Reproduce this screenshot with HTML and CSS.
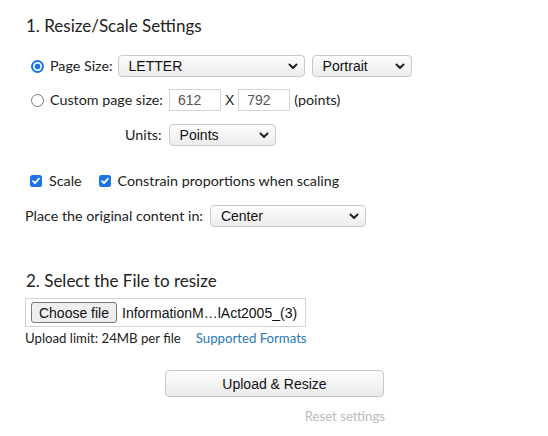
FILE: index.html
```html
<!DOCTYPE html>
<html>
<head>
<meta charset="utf-8">
<link rel="stylesheet" href="styles.css">
</head>
<body>
<div class="page">
  <h2 class="heading h1">1. Resize/Scale Settings</h2>

  <div class="row row-size">
    <input type="radio" name="mode" class="radio" checked>
    <span class="label">Page Size:</span>
    <span class="sel sel-size"><select><option>LETTER</option></select><svg class="chev" width="10" height="7" viewBox="0 0 10 7"><path d="M1.5 1.5 L5 5 L8.5 1.5" fill="none" stroke="#222" stroke-width="2" stroke-linecap="round" stroke-linejoin="round"/></svg></span>
    <span class="sel sel-orient"><select><option>Portrait</option></select><svg class="chev" width="10" height="7" viewBox="0 0 10 7"><path d="M1.5 1.5 L5 5 L8.5 1.5" fill="none" stroke="#222" stroke-width="2" stroke-linecap="round" stroke-linejoin="round"/></svg></span>
  </div>

  <div class="row row-custom">
    <input type="radio" name="mode" class="radio">
    <span class="label lbl-custom">Custom page size:</span>
    <input type="text" class="num" value="612">
    <span class="label x">X</span>
    <input type="text" class="num" value="792">
    <span class="label pts">(points)</span>
  </div>

  <div class="row row-units">
    <span class="label">Units:</span>
    <span class="sel sel-units"><select><option>Points</option></select><svg class="chev" width="10" height="7" viewBox="0 0 10 7"><path d="M1.5 1.5 L5 5 L8.5 1.5" fill="none" stroke="#222" stroke-width="2" stroke-linecap="round" stroke-linejoin="round"/></svg></span>
  </div>

  <div class="row row-check">
    <span class="check"><svg width="12" height="12" viewBox="0 0 12 12"><path d="M3 6.2 L5 8.2 L9 3.6" fill="none" stroke="#fff" stroke-width="1.8" stroke-linecap="round" stroke-linejoin="round"/></svg></span>
    <span class="label">Scale</span>
    <span class="check check2"><svg width="12" height="12" viewBox="0 0 12 12"><path d="M3 6.2 L5 8.2 L9 3.6" fill="none" stroke="#fff" stroke-width="1.8" stroke-linecap="round" stroke-linejoin="round"/></svg></span>
    <span class="label">Constrain proportions when scaling</span>
  </div>

  <div class="row row-place">
    <span class="label">Place the original content in:</span>
    <span class="sel sel-place"><select><option>Center</option></select><svg class="chev" width="10" height="7" viewBox="0 0 10 7"><path d="M1.5 1.5 L5 5 L8.5 1.5" fill="none" stroke="#222" stroke-width="2" stroke-linecap="round" stroke-linejoin="round"/></svg></span>
  </div>

  <h2 class="heading h2">2. Select the File to resize</h2>

  <div class="filebox">
    <span class="filebtn">Choose file</span>
    <span class="filename">InformationM…lAct2005_(3)</span>
  </div>

  <div class="limits">
    <span>Upload limit: 24MB per file</span>
    <a class="formats" href="#">Supported Formats</a>
  </div>

  <div class="actions">
    <button class="upload">Upload &amp; Resize</button>
    <a class="reset" href="#">Reset settings</a>
  </div>
</div>
</body>
</html>
```

FILE: styles.css
```css
html, body {
  margin: 0;
  padding: 0;
  background: #fff;
}
.page {
  padding: 0 0 0 25px;
  font-family: Lato, "Noto Sans", sans-serif;
  color: #222;
  width: 523px;
}
.heading {
  font-family: Lato, "Noto Sans", sans-serif;
  font-weight: 400;
  font-size: 17px;
  line-height: 24px;
  margin: 0;
  color: #222;
  padding-left: 1px;
}
.h1 {
  margin-top: 14px;
}
.h2 {
  margin-top: 42px;
}
.row {
  display: flex;
  align-items: center;
  font-size: 14.3px;
}
.label {
  font-size: 14.3px;
  line-height: 18px;
  white-space: nowrap;
}
.row-size {
  margin-top: 17px;
  height: 22px;
}
.row-custom {
  margin-top: 12px;
  height: 22px;
}
.row-units {
  margin-top: 13px;
  height: 22px;
  padding-left: 100px;
}
.row-check {
  margin-top: 25px;
  height: 20px;
}
.row-place {
  margin-top: 14px;
  height: 22px;
}
.radio {
  appearance: none;
  -webkit-appearance: none;
  margin: 0 6px 0 6px;
  width: 13px;
  height: 13px;
  border-radius: 50%;
  border: 1px solid #777;
  background: #fff;
  box-sizing: border-box;
}
.radio:checked {
  border: 2px solid #1a73e8;
  background: radial-gradient(circle, #1a73e8 0 2.6px, #fff 3.2px);
}
.sel {
  position: relative;
  display: inline-block;
  height: 22px;
}
.sel select {
  appearance: none;
  -webkit-appearance: none;
  height: 22px;
  box-sizing: border-box;
  border: 1px solid #c9c9c9;
  border-radius: 4px;
  background: linear-gradient(#fdfdfd, #ececec);
  font-family: "Liberation Sans", Arial, sans-serif;
  font-size: 14px;
  color: #111;
  padding: 0 0 0 10px;
  margin: 0;
  width: 100%;
}
.chev {
  position: absolute;
  right: 7px;
  top: 8px;
  pointer-events: none;
}
.sel-size {
  margin-left: 5px;
  width: 187px;
}
.sel-orient {
  margin-left: 7px;
  width: 100px;
}
.sel-units {
  margin-left: 7px;
  width: 107px;
}
.sel-place {
  margin-left: 7px;
  width: 156px;
}
.num {
  width: 52px;
  height: 22px;
  box-sizing: border-box;
  border: 1px solid #d4d4d4;
  background: #fff;
  font-family: "Liberation Sans", Arial, sans-serif;
  font-size: 14px;
  color: #555;
  padding: 0 0 0 8px;
  margin: 0;
  outline: none;
}
.lbl-custom {
  margin-right: 6px;
}
.x {
  margin: 0 4px;
  font-family: "Liberation Sans", Arial, sans-serif;
  font-size: 14px;
}
.pts {
  margin-left: 4px;
}
.check {
  width: 12px;
  height: 12px;
  border-radius: 2.5px;
  background: #1a73e8;
  display: inline-flex;
  margin: 0 7px 0 5px;
}
.check2 {
  margin-left: 17px;
}
.filebox {
  margin-top: 5px;
  width: 281px;
  height: 29px;
  box-sizing: border-box;
  border: 1px solid #d4d4d4;
  display: flex;
  align-items: center;
  padding-left: 5px;
  font-family: "Liberation Sans", Arial, sans-serif;
  font-size: 14px;
}
.filebtn {
  display: inline-flex;
  align-items: center;
  justify-content: center;
  width: 86px;
  height: 21px;
  box-sizing: border-box;
  border: 1px solid #767676;
  border-radius: 3px;
  background: #efefef;
  color: #111;
}
.filename {
  margin-left: 5px;
  color: #111;
}
.limits {
  margin-top: 2px;
  font-size: 13.2px;
  line-height: 18px;
  display: flex;
  gap: 15px;
}
.formats {
  color: #2679b8;
  text-decoration: none;
}
.actions {
  width: 360px;
  margin-top: 23px;
  display: flex;
  flex-direction: column;
  align-items: flex-end;
}
.upload {
  width: 219px;
  height: 27px;
  border: 1px solid #c9c9c9;
  border-radius: 4px;
  background: linear-gradient(#fdfdfd, #eaeaea);
  font-family: "Liberation Sans", Arial, sans-serif;
  font-size: 14px;
  color: #111;
  padding: 0;
  align-self: flex-start;
  margin-left: 140px;
}
.reset {
  margin-top: 10px;
  font-size: 13.2px;
  line-height: 18px;
  color: #bbb;
  text-decoration: none;
}
```
